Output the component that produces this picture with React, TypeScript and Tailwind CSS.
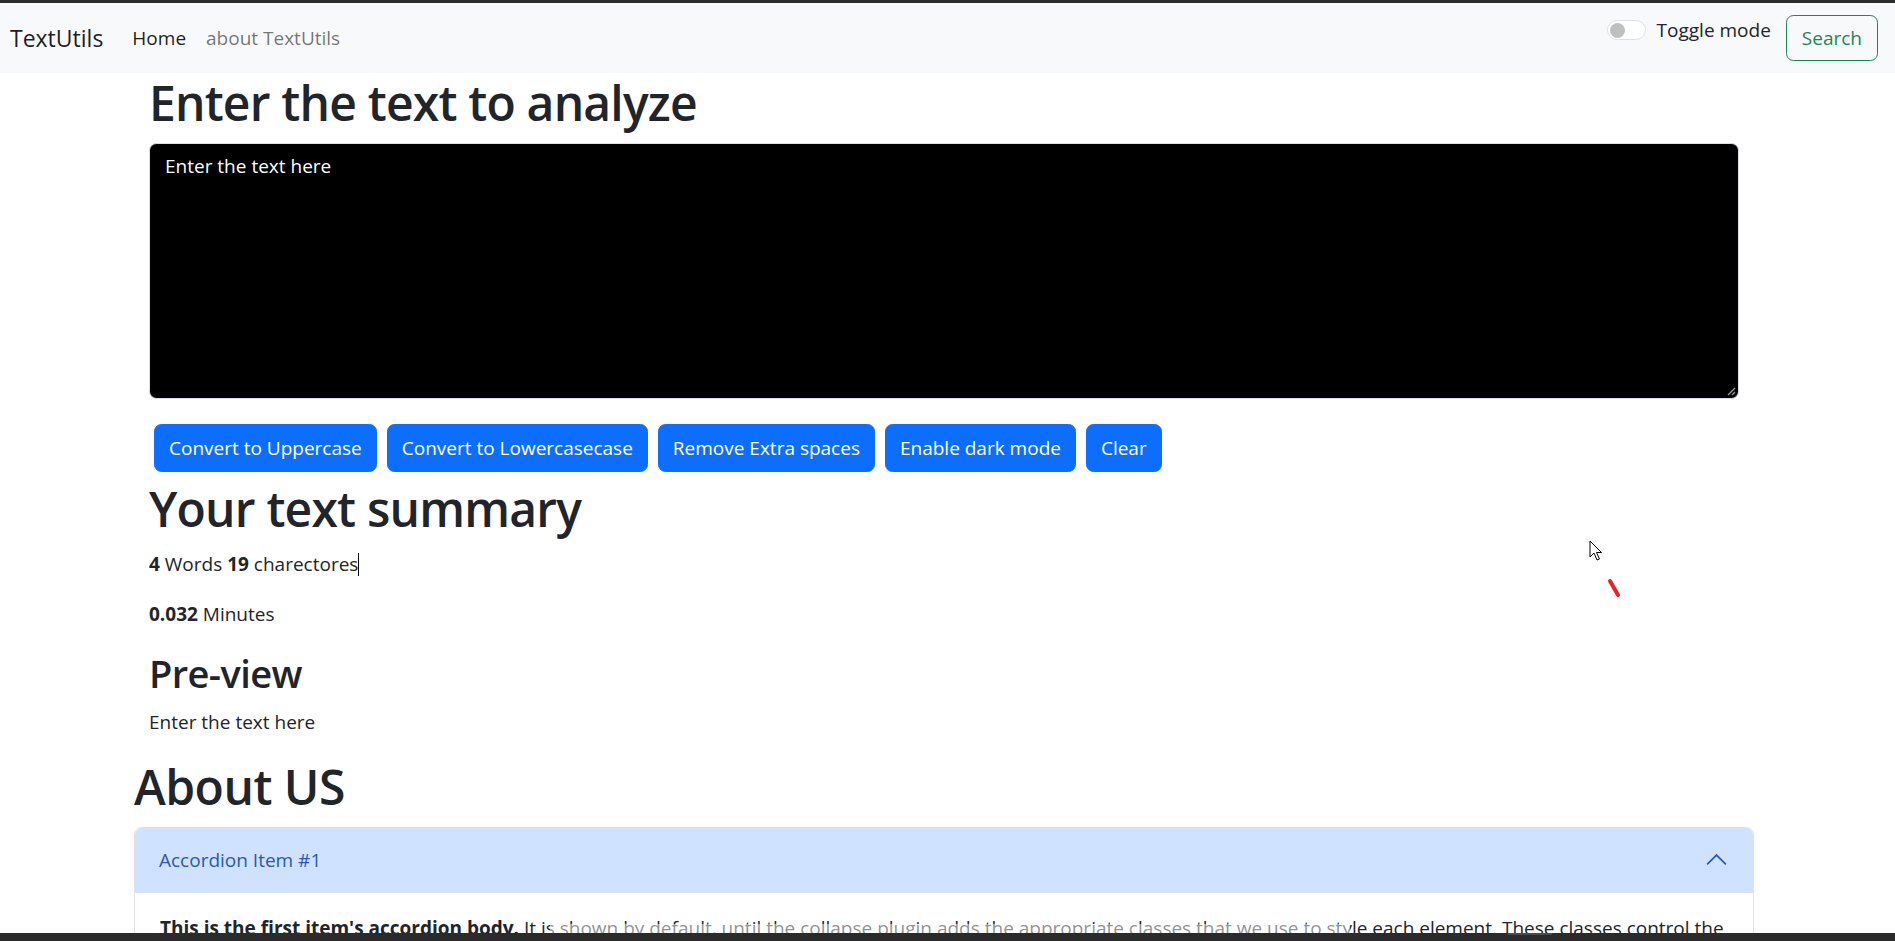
import React from 'react';

const buttons = [
  'Convert to Uppercase',
  'Convert to Lowercasecase',
  'Remove Extra spaces',
  'Enable dark mode',
  'Clear',
];

function Navbar() {
  return (
    <nav className="h-[70px] shrink-0 bg-[#f8f9fa] flex items-center pl-[10px] pr-[17px]">
      <span className="text-[23px] text-black/90 mr-[19px]">TextUtils</span>
      <a className="px-[10px] text-[19px] text-black/90">Home</a>
      <a className="px-[10px] text-[19px] text-black/55">about TextUtils</a>

      <div className="ml-auto flex items-center">
        {/* dark mode switch */}
        <div className="flex items-center mb-[16px]">
          <div className="w-[39px] h-[20px] rounded-full border border-[#dee2e6] bg-white flex items-center px-[2px]">
            <div className="w-[15px] h-[15px] rounded-full bg-[#bfbfbf]" />
          </div>
          <label className="ml-[11px] text-[19px] leading-[30px] text-[#212529]">Toggle mode</label>
        </div>
        <button className="ml-[15px] h-[46px] px-[15px] border border-[#198754] text-[#198754] text-[19px] rounded-[7.5px]">
          Search
        </button>
      </div>
    </nav>
  );
}

function TextForm() {
  return (
    <div className="px-[15px]">
      <h1 className="text-[48px] leading-[60px] font-semibold tracking-[-0.8px] mb-[10px]">Enter the text to analyze</h1>
      <div className="relative h-[256px] bg-black border border-[#dee2e6] rounded-[7.5px] px-[15px] py-[7px] mb-[20px]">
        <p className="text-white text-[19px] leading-[30px]">Enter the text here</p>
        <svg className="absolute right-[2px] bottom-[2px]" width="10" height="10" viewBox="0 0 10 10">
          <path d="M2 9 L9 2 M6 9 L9 6" stroke="#9a9a9a" strokeWidth="1.3" />
        </svg>
      </div>
      <div className="flex">
        {buttons.map((b) => (
          <button
            key={b}
            className="mx-[5px] my-[5px] bg-[#0d6efd] text-white text-[19px] leading-[30px] px-[14px] py-[8px] rounded-[7.5px] border border-[#0d6efd]"
          >
            {b}
          </button>
        ))}
      </div>
    </div>
  );
}

function Summary() {
  return (
    <div className="px-[15px] pt-[2px]">
      <h1 className="text-[48px] leading-[60px] font-semibold tracking-[-0.8px] mb-[10px]">Your text summary</h1>
      <p className="text-[19px] leading-[30px] mb-[20px] flex items-center">
        <span>
          <b className="font-bold">4</b> Words <b className="font-bold">19</b> charectores
        </span>
        <span className="inline-block w-px h-[23px] bg-black" />
      </p>
      <p className="text-[19px] leading-[30px] mb-[20px]">
        <b className="font-bold">0.032</b> Minutes
      </p>
      <h2 className="text-[38px] leading-[48px] font-semibold tracking-[-0.6px] mb-[10px]">Pre-view</h2>
      <p className="text-[19px] leading-[30px] mb-[20px]">Enter the text here</p>
    </div>
  );
}

function About() {
  return (
    <div>
      <h1 className="text-[48px] leading-[60px] font-semibold tracking-[-0.5px] mb-[10px]">About US</h1>
      <div className="border border-[#dee2e6] rounded-t-[7.5px]">
        <div className="h-[65px] bg-[#cfe2ff] rounded-t-[6.5px] px-[24px] flex items-center justify-between shadow-[inset_0_-1px_0_#dee2e6]">
          <span className="text-[19px] text-[#2b59b8]">Accordion Item #1</span>
          <svg width="25" height="25" viewBox="0 0 16 16" fill="none">
            <path d="M2 10.5 L8 4.5 L14 10.5" stroke="#2b59b8" strokeWidth="1.1" />
          </svg>
        </div>
        <div className="px-[25px] py-[20px] text-[19px] leading-[30px]">
          <strong className="font-bold">This is the first item's accordion body.</strong> It is shown by default, until
          the collapse plugin adds the appropriate classes that we use to style each element. These classes control the
          overall appearance, as well as the showing and hiding via CSS transitions. You can modify any of this with
          custom CSS or overriding our default variables.
        </div>
      </div>
    </div>
  );
}

export default function App() {
  return (
    <div className="relative h-[941px] flex flex-col overflow-hidden bg-white text-[#212529] font-['Open_Sans','Noto_Sans',sans-serif]">
      <div className="h-[3px] shrink-0 bg-[#2d2d2d]" />
      <Navbar />
      <main className="flex-1 overflow-hidden">
        <div className="w-[1620px] ml-[134px]">
          <TextForm />
          <Summary />
          <About />
        </div>
      </main>
      <div className="relative h-[8px] shrink-0 bg-[#2b2b2b]">
        <div className="absolute left-[1508px] top-0 w-[44px] h-[2px] bg-[#4a4a4a]" />
      </div>

      {/* recording overlay bits */}
      <div className="absolute left-[550px] top-[924px] w-[800px] h-[9px] bg-white/50" />
      <svg className="absolute left-[1589px] top-[540px]" width="14" height="22" viewBox="0 0 14 22">
        <path d="M1 1 L1 17 L5 13 L8 20 L10.5 19 L7.5 12.5 L12.5 12.5 Z" fill="white" stroke="black" strokeWidth="1" strokeLinejoin="round" />
      </svg>
      <svg className="absolute left-[1606px] top-[578px]" width="16" height="20" viewBox="0 0 16 20">
        <path d="M4 3 L12 17" stroke="#e5222b" strokeWidth="4" strokeLinecap="round" />
      </svg>
    </div>
  );
}
